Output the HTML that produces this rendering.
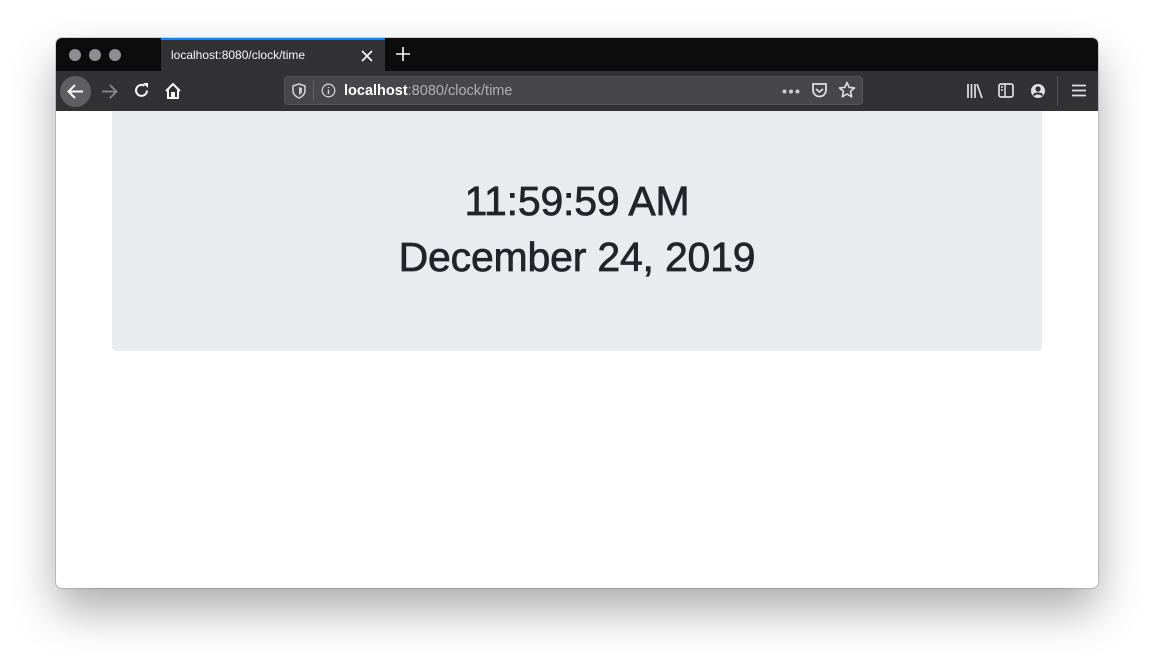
<!DOCTYPE html>
<html><head><meta charset="utf-8"><style>
*{margin:0;padding:0;box-sizing:border-box}
body{width:1154px;height:662px;background:#fff;position:relative;overflow:hidden;font-family:"Liberation Sans",sans-serif}
.win{position:absolute;left:56px;top:38px;width:1042px;height:550px;border-radius:6px;background:#fff;box-shadow:0 22px 45px rgba(0,0,0,.33),0 0 0 1px rgba(0,0,0,.15);overflow:hidden}
.title{position:absolute;left:0;top:0;width:100%;height:33px;background:#0c0c0d}
.dot{position:absolute;top:11px;width:12px;height:12px;border-radius:50%;background:#8e8e92}
.tab{position:absolute;left:105px;top:0;width:224px;height:33px;background:#323234;border-top:2px solid #0a84ff;color:#f9f9fa;font-size:12px;line-height:31px;padding-left:10px}
.tb{position:absolute;left:0;top:33px;width:100%;height:40px;background:#323234}
.url{position:absolute;left:228px;top:5px;width:579px;height:29px;background:#474749;border-radius:4px;border:1px solid #555}
.url span{position:absolute;left:59px;top:6px;font-size:14.5px;color:#fff}
.url span b{font-weight:bold}
.url span i{font-style:normal;color:#b1b1b3}
.jumbo{position:absolute;left:56px;top:73px;width:930px;height:240px;background:#e9ecef;border-radius:0 0 4px 4px}
.t{position:absolute;left:0;width:100%;text-align:center;color:#212529;font-size:41px;-webkit-text-stroke:0.7px #212529;letter-spacing:-.2px}
svg{position:absolute}
</style></head><body>
<div class="win">
 <div class="title">
  <div class="dot" style="left:13px"></div><div class="dot" style="left:33px"></div><div class="dot" style="left:53px"></div>
  <div class="tab">localhost:8080/clock/time
   <svg style="left:200px;top:10px" width="12" height="12" viewBox="0 0 12 12"><path d="M1 1L11 11M11 1L1 11" stroke="#f9f9fa" stroke-width="1.6"/></svg>
  </div>
  <svg style="left:340px;top:9px" width="14" height="14" viewBox="0 0 14 14"><path d="M7 0V14M0 7H14" stroke="#f9f9fa" stroke-width="1.6"/></svg>
 </div>
 <div class="tb">
  <div style="position:absolute;left:4px;top:5px;width:31px;height:31px;border-radius:50%;background:#5f5f62"></div>
  <svg style="left:10px;top:11px" width="19" height="19" viewBox="0 0 19 19"><path d="M17 9.5H3M9 3L2.5 9.5L9 16" stroke="#f9f9fa" stroke-width="2" fill="none"/></svg>
  <svg style="left:44px;top:11px" width="19" height="19" viewBox="0 0 19 19"><path d="M2 9.5H16M10 3L16.5 9.5L10 16" stroke="#8a8a8c" stroke-width="1.8" fill="none"/></svg>
  <svg style="left:77px;top:11px" width="17" height="17" viewBox="0 0 17 17"><path d="M14 8.5A5.5 5.5 0 1 1 11.5 3.8" stroke="#f9f9fa" stroke-width="2" fill="none"/><path d="M10 1H15V6Z" fill="#f9f9fa"/></svg>
  <svg style="left:108px;top:11px" width="18" height="18" viewBox="0 0 18 18"><path d="M2 9L9 2L16 9M4 7.5V16H8V11H10V16H14V7.5" stroke="#f9f9fa" stroke-width="2" fill="none"/></svg>
  <div class="url">
   <svg style="left:7px;top:6px" width="14" height="16" viewBox="0 0 14 16"><path d="M7 1L13 3V8C13 11 10 14 7 15C4 14 1 11 1 8V3Z" stroke="#d0d0d0" stroke-width="1.6" fill="none"/><path d="M7 4V12C9 11 10 9.5 10 8V5Z" fill="#d0d0d0"/></svg>
   <div style="position:absolute;left:28px;top:4px;width:1px;height:19px;background:#666"></div>
   <svg style="left:36px;top:6px" width="15" height="15" viewBox="0 0 15 15"><circle cx="7.5" cy="7.5" r="6.3" stroke="#d0d0d0" stroke-width="1.3" fill="none"/><path d="M7.5 6.5V11M7.5 4V5" stroke="#d0d0d0" stroke-width="1.5"/></svg>
   <span><b>localhost</b><i>:8080/clock/time</i></span>
   <svg style="left:497px;top:12px" width="18" height="5" viewBox="0 0 18 5"><circle cx="2.5" cy="2.5" r="2" fill="#d0d0d0"/><circle cx="9" cy="2.5" r="2" fill="#d0d0d0"/><circle cx="15.5" cy="2.5" r="2" fill="#d0d0d0"/></svg>
   <svg style="left:526px;top:5px" width="17" height="17" viewBox="0 0 17 17"><path d="M2 2H15V8A6.5 6.5 0 0 1 2 8Z" stroke="#e0e0e0" stroke-width="1.8" fill="none"/><path d="M5 7L8.5 10L12 7" stroke="#e0e0e0" stroke-width="1.8" fill="none"/></svg>
   <svg style="left:553px;top:4px" width="18" height="18" viewBox="0 0 18 18"><path d="M9 1.5L11.2 6.4L16.5 6.9L12.5 10.4L13.7 15.8L9 13L4.3 15.8L5.5 10.4L1.5 6.9L6.8 6.4Z" stroke="#e0e0e0" stroke-width="1.6" fill="none" stroke-linejoin="round"/></svg>
  </div>
  <svg style="left:910px;top:12px" width="17" height="16" viewBox="0 0 17 16"><path d="M2 1V15M5.5 1V15M9 1V15M11 1L16 15" stroke="#e0e0e0" stroke-width="1.7"/></svg>
  <svg style="left:942px;top:12px" width="16" height="15" viewBox="0 0 16 15"><rect x="1" y="1" width="14" height="13" rx="2" stroke="#e0e0e0" stroke-width="1.7" fill="none"/><path d="M7 1V14M3 4H5M3 7H5" stroke="#e0e0e0" stroke-width="1.5"/></svg>
  <svg style="left:974px;top:12px" width="16" height="16" viewBox="0 0 16 16"><circle cx="8" cy="8" r="7" fill="#e0e0e0"/><circle cx="8" cy="6" r="2.6" fill="#323234"/><path d="M3.5 12.5C5 9.8 11 9.8 12.5 12.5" stroke="#323234" stroke-width="2" fill="none"/></svg>
  <div style="position:absolute;left:1001px;top:5px;width:1px;height:30px;background:#555"></div>
  <svg style="left:1016px;top:13px" width="14" height="13" viewBox="0 0 14 13"><path d="M0 1.5H14M0 6.5H14M0 11.5H14" stroke="#e0e0e0" stroke-width="1.7"/></svg>
 </div>
 <div class="jumbo">
  <div class="t" style="top:67px">11:59:59 AM</div>
  <div class="t" style="top:123px">December 24, 2019</div>
 </div>
</div>
</body></html>
